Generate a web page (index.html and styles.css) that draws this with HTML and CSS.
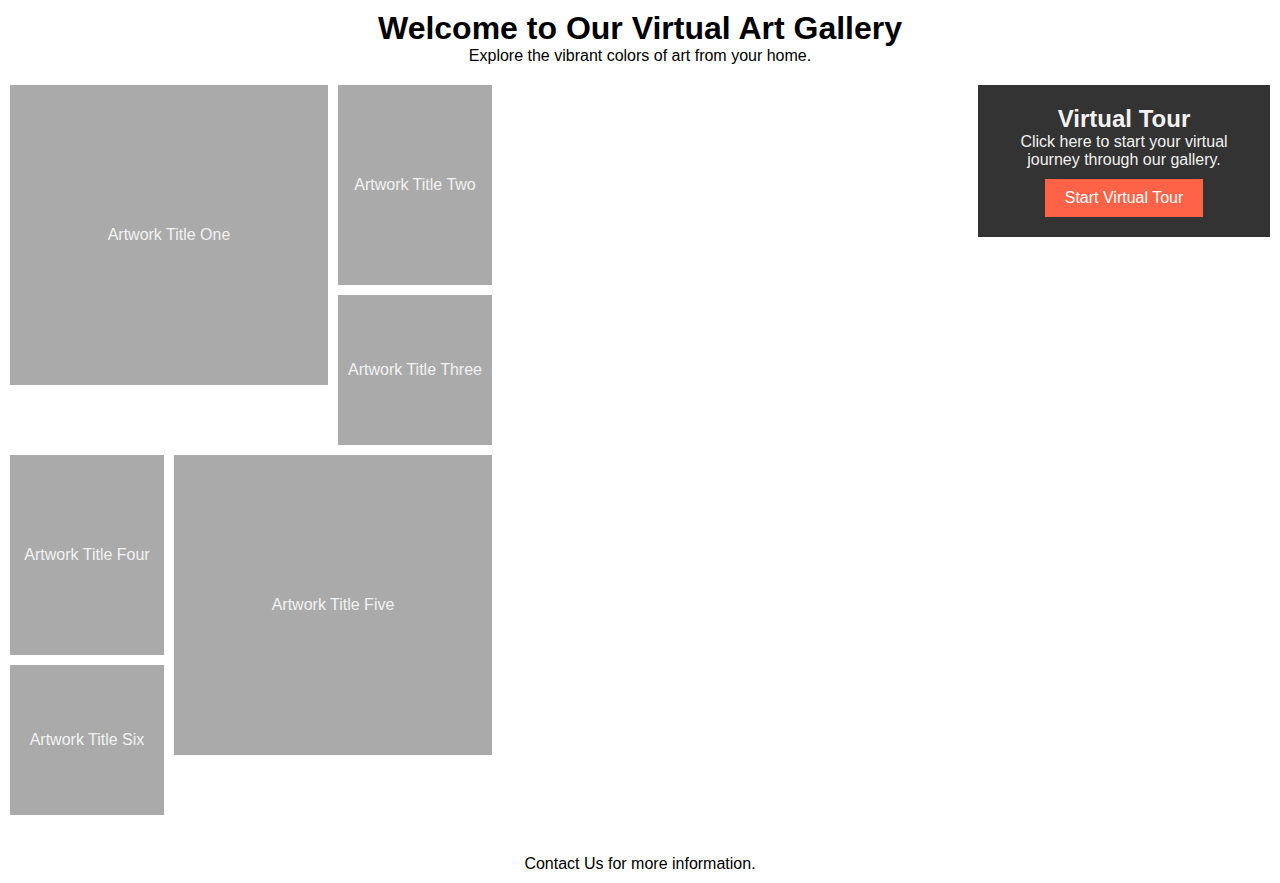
FILE: index.html
```html
<!DOCTYPE html>
<html lang="en">
<head>
<meta charset="utf-8">
<title>Virtual Art Gallery</title>
<link rel="stylesheet" href="styles.css">
</head>
<body>
<header class="site-header">
  <h1 class="site-title">Welcome to Our Virtual Art Gallery</h1>
  <p class="site-subtitle">Explore the vibrant colors of art from your home.</p>
</header>
<main class="main">
  <section class="gallery">
    <div class="art art-one">Artwork Title One</div>
    <div class="art art-two">Artwork Title Two</div>
    <div class="art art-three">Artwork Title Three</div>
    <div class="art art-four">Artwork Title Four</div>
    <div class="art art-five">Artwork Title Five</div>
    <div class="art art-six">Artwork Title Six</div>
  </section>
  <aside class="tour">
    <h2 class="tour-title">Virtual Tour</h2>
    <p class="tour-text">Click here to start your virtual journey through our gallery.</p>
    <button class="tour-button" type="button">Start Virtual Tour</button>
  </aside>
</main>
<footer class="site-footer">
  <p class="footer-text">Contact Us for more information.</p>
</footer>
</body>
</html>
```
FILE: styles.css
```css
html, body {
  margin: 0;
  padding: 0;
  background: #fff;
  color: #000;
  font-family: "Liberation Sans", Arial, sans-serif;
}

.site-header {
  padding: 10px;
  text-align: center;
}

.site-title {
  margin: 0;
  font-size: 32px;
  line-height: normal;
  font-weight: bold;
}

.site-subtitle {
  margin: 0;
  font-size: 16px;
  line-height: normal;
}

.main {
  display: flex;
  justify-content: space-between;
  align-items: flex-start;
  padding: 10px;
}

.gallery {
  display: grid;
  grid-template-columns: repeat(3, 154px);
  grid-template-rows: 200px 90px 50px 200px 90px 50px;
  gap: 10px;
}

.art {
  background: #aaaaaa;
  color: #f2f2f2;
  font-size: 16px;
  display: flex;
  align-items: center;
  justify-content: center;
  text-align: center;
}

.art-one { grid-column: 1 / 3; grid-row: 1 / 3; }
.art-two { grid-column: 3; grid-row: 1; }
.art-three { grid-column: 3; grid-row: 2 / 4; }
.art-four { grid-column: 1; grid-row: 4; }
.art-five { grid-column: 2 / 4; grid-row: 4 / 6; }
.art-six { grid-column: 1; grid-row: 5 / 7; }

.tour {
  width: 252px;
  padding: 20px;
  background: #333333;
  color: #f2f2f2;
  text-align: center;
}

.tour-title {
  margin: 0;
  font-size: 24px;
  line-height: normal;
  font-weight: bold;
}

.tour-text {
  margin: 0 0 10px;
  font-size: 16px;
  line-height: normal;
}

.tour-button {
  display: inline-block;
  margin: 0;
  border: none;
  padding: 10px 20px;
  background: #ff6347;
  color: #fff;
  font-family: "Liberation Sans", Arial, sans-serif;
  font-size: 16px;
  line-height: normal;
  cursor: pointer;
}

.site-footer {
  padding: 30px 10px 10px;
  text-align: center;
}

.footer-text {
  margin: 0;
  font-size: 16px;
  line-height: normal;
}
```
